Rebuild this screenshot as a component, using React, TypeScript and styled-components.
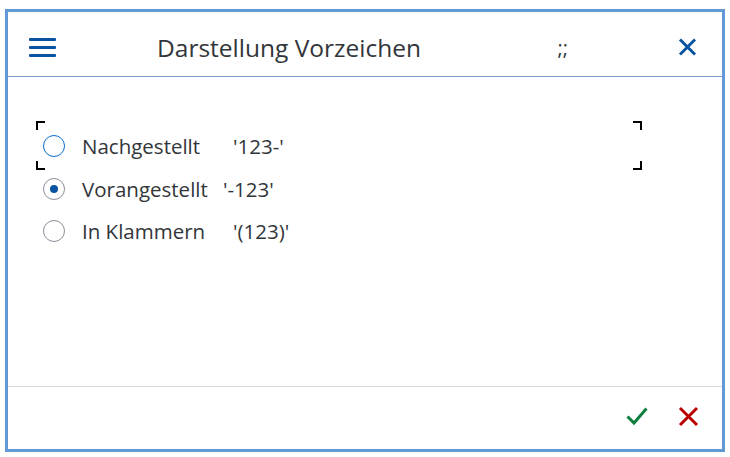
import React from "react";
import styled, { createGlobalStyle } from "styled-components";

const Global = createGlobalStyle`
  html, body { margin: 0; padding: 0; background: #ffffff; }
  body { font-family: "Open Sans", "Noto Sans", sans-serif; color: #32363a; }
`;

const Frame = styled.div`
  margin: 9px 0 0 5px;
  width: 720px;
  height: 443px;
  box-sizing: border-box;
  border: 3px solid #6398d6;
  display: flex;
  flex-direction: column;
  background: #fff;
`;

const Header = styled.div`
  height: 65px;
  box-sizing: border-box;
  border-bottom: 1px solid #7f9fcc;
  display: flex;
  align-items: center;
  padding: 6px 25px 0 21px;
`;

const IconButton = styled.div`
  display: flex;
  align-items: center;
  justify-content: center;
`;

const Title = styled.div`
  margin-left: 101px;
  font-size: 24.5px;
  color: #32363a;
  white-space: nowrap;
`;

const Extra = styled.div`
  margin-left: auto;
  margin-right: 110px;
  font-size: 20px;
  color: #32363a;
`;

const Content = styled.div`
  flex: 1;
  padding: 48px 0 0 28px;
  box-sizing: border-box;
  border-bottom: 1px solid #d9d9d9;
  display: flex;
  flex-direction: column;
`;

const Row = styled.div`
  position: relative;
  box-sizing: border-box;
  height: 42.5px;
  width: 606px;
  display: flex;
  align-items: center;
  padding-left: 7px;
  font-size: 20.5px;
  color: #32363a;
`;

const Corner = styled.span<{ $v: "top" | "bottom"; $h: "left" | "right" }>`
  position: absolute;
  width: 9px;
  height: 9px;
  ${(p) => p.$v}: ${(p) => (p.$v === "top" ? -4 : -2)}px;
  ${(p) => p.$h}: 0;
  border-${(p) => p.$v}: 2.5px solid #000;
  border-${(p) => p.$h}: 2.5px solid #000;
  box-sizing: border-box;
`;

const Radio = styled.span<{ $focused?: boolean; $checked?: boolean }>`
  width: 22px;
  height: 22px;
  box-sizing: border-box;
  border-radius: 50%;
  border: 1.5px solid ${(p) => (p.$focused ? "#0a6ed1" : "#89919a")};
  display: flex;
  align-items: center;
  justify-content: center;
  flex: none;
  &::after {
    content: "";
    width: 8px;
    height: 8px;
    border-radius: 50%;
    background: #0854a0;
    display: ${(p) => (p.$checked ? "block" : "none")};
  }
`;

const Label = styled.span<{ $w: number }>`
  margin-left: 17px;
  width: ${(p) => p.$w}px;
  white-space: nowrap;
`;

const Value = styled.span`
  white-space: nowrap;
`;

const Footer = styled.div`
  height: 62px;
  display: flex;
  align-items: center;
  justify-content: flex-end;
  gap: 30px;
  padding: 0 23px 4px 0;
  box-sizing: border-box;
`;

const options = [
  { label: "Nachgestellt", value: "'123-'", w: 151, focused: true, checked: false },
  { label: "Vorangestellt", value: "'-123'", w: 141, focused: false, checked: true },
  { label: "In Klammern", value: "'(123)'", w: 151, focused: false, checked: false },
];

export default function App() {
  return (
    <>
      <Global />
      <Frame>
        <Header>
          <IconButton>
            <svg width="27" height="19" viewBox="0 0 27 19">
              <rect x="0" y="0" width="27" height="3" rx="1" fill="#0854a0" />
              <rect x="0" y="8" width="27" height="3" rx="1" fill="#0854a0" />
              <rect x="0" y="16" width="27" height="3" rx="1" fill="#0854a0" />
            </svg>
          </IconButton>
          <Title>Darstellung Vorzeichen</Title>
          <Extra>;;</Extra>
          <IconButton>
            <svg width="19" height="18" viewBox="0 0 19 18">
              <path d="M2 1.5 L17 16.5 M17 1.5 L2 16.5" stroke="#0854a0" strokeWidth="3" fill="none" />
            </svg>
          </IconButton>
        </Header>
        <Content>
          {options.map((o) => (
            <Row key={o.label}>
              {o.focused && (
                <>
                  <Corner $v="top" $h="left" />
                  <Corner $v="top" $h="right" />
                  <Corner $v="bottom" $h="left" />
                  <Corner $v="bottom" $h="right" />
                </>
              )}
              <Radio $focused={o.focused} $checked={o.checked} />
              <Label $w={o.w}>{o.label}</Label>
              <Value>{o.value}</Value>
            </Row>
          ))}
        </Content>
        <Footer>
          <IconButton>
            <svg width="22" height="20" viewBox="0 0 22 20">
              <path d="M1.5 10.5 L8 17 L20.5 2.5" stroke="#107e3e" strokeWidth="3" fill="none" />
            </svg>
          </IconButton>
          <IconButton>
            <svg width="21" height="21" viewBox="0 0 21 21">
              <path d="M2 2 L19 19 M19 2 L2 19" stroke="#bb0000" strokeWidth="3" fill="none" />
            </svg>
          </IconButton>
        </Footer>
      </Frame>
    </>
  );
}
